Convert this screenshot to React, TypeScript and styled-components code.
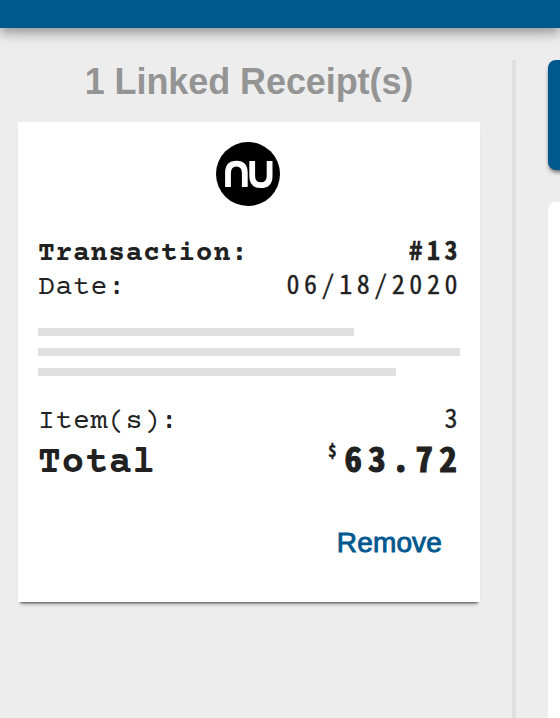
import React from "react";
import styled, { createGlobalStyle } from "styled-components";

const blue = "#00588f";

const GlobalStyle = createGlobalStyle`
  * { box-sizing: border-box; }
  html, body { margin: 0; padding: 0; background: #ededed; }
  body { overflow: hidden; }
`;

const Page = styled.div`
  display: flex;
  flex-direction: column;
  width: 560px;
  height: 718px;
  overflow: hidden;
  background: #ededed;
  color: #212121;
  font-family: "Liberation Sans", Arial, sans-serif;
`;

const Header = styled.header`
  flex: none;
  height: 28px;
  background: ${blue};
  box-shadow: 0 4px 8px -2px rgba(0, 0, 0, 0.2), 0 8px 10px rgba(0, 0, 0, 0.14),
    0 2px 20px rgba(0, 0, 0, 0.12);
`;

const Content = styled.main`
  display: flex;
  flex: 1;
  padding-top: 32px;
`;

const ReceiptColumn = styled.section`
  flex: none;
  width: 516px;
  padding: 0 32px 0 18px;
  border-right: 4px solid #e0e0e0;
`;

const Heading = styled.h1`
  margin: 0;
  height: 62px;
  font-size: 36px;
  line-height: 44px;
  letter-spacing: -0.08px;
  text-align: center;
  white-space: nowrap;
  color: #949494;
`;

const Card = styled.article`
  display: flex;
  flex-direction: column;
  width: 462px;
  height: 480px;
  padding: 20px 20px 0;
  background: #fff;
  box-shadow: 0 3px 2px -2px rgba(0, 0, 0, 0.5), 0 5px 4px -3px rgba(0, 0, 0, 0.3);
`;

const Logo = styled.svg`
  flex: none;
  width: 64px;
  height: 64px;
  margin: 0 0 28px 178px;
`;

const Row = styled.div<{ $bold?: boolean }>`
  display: flex;
  align-items: baseline;
  justify-content: space-between;
  height: 34px;
  font-family: "Courier Prime", "Liberation Mono", monospace;
  font-size: 28px;
  line-height: 40px;
  letter-spacing: 0.75px;
  font-weight: ${(p) => (p.$bold ? 700 : 400)};
`;

const Value = styled.span`
  font-family: "Noto Sans Mono CJK SC", "Liberation Mono", monospace;
  font-size: 26px;
  line-height: 1;
  letter-spacing: 4.55px;
  margin-right: -2px;
  -webkit-text-stroke: 0.3px currentColor;
`;

const Lines = styled.div`
  display: flex;
  flex-direction: column;
  gap: 12px;
  margin: 26px 0;
`;

const Line = styled.div<{ $width: number }>`
  width: ${(p) => p.$width}px;
  height: 8px;
  background: #e0e0e0;
`;

const TotalRow = styled(Row)`
  height: 48px;
  font-size: 38px;
  line-height: 56px;
  letter-spacing: 0.8px;
`;

const Amount = styled(Value)`
  display: flex;
  align-items: baseline;
  font-size: 35px;
  letter-spacing: 6.2px;
  margin-right: -3px;
  -webkit-text-stroke-width: 1px;
`;

const Currency = styled.span`
  align-self: flex-start;
  font-size: 17px;
  line-height: 22px;
  letter-spacing: 8px;
  -webkit-text-stroke-width: 0.3px;
`;

const Actions = styled.div`
  display: flex;
  justify-content: flex-end;
  padding: 41px 18px 0 0;
`;

const RemoveButton = styled.button`
  padding: 0;
  border: 0;
  background: none;
  color: ${blue};
  font: 400 28px/36px "Liberation Sans", Arial, sans-serif;
  letter-spacing: 0.15px;
  -webkit-text-stroke: 0.9px ${blue};
`;

const SideColumn = styled.aside`
  flex: none;
  width: 200px;
  margin-left: 32px;
`;

const SideBanner = styled.div`
  height: 110px;
  border-radius: 8px;
  background: ${blue};
  box-shadow: 0 3px 4px -1px rgba(0, 0, 0, 0.6);
`;

const SidePanel = styled.div`
  height: 600px;
  margin-top: 32px;
  border-radius: 8px;
  background: #fff;
`;

export default function App() {
  return (
    <Page>
      <GlobalStyle />
      <Header />
      <Content>
        <ReceiptColumn>
          <Heading>1 Linked Receipt(s)</Heading>
          <Card>
            <Logo viewBox="0 0 64 64" role="img" aria-label="nu">
              <circle cx="32" cy="32" r="32" fill="#000" />
              <g fill="none" stroke="#fff" strokeWidth="5.8">
                <path d="M12 45V31Q12 21.6 20.4 21.6Q28.8 21.6 28.8 31V45" />
                <path d="M36.2 19V34Q36.2 43.2 44.9 43.2Q53.6 43.2 53.6 34V19" />
              </g>
            </Logo>
            <Row $bold>
              <span>Transaction:</span>
              <Value>#13</Value>
            </Row>
            <Row>
              <span>Date:</span>
              <Value>06/18/2020</Value>
            </Row>
            <Lines>
              <Line $width={316} />
              <Line $width={422} />
              <Line $width={358} />
            </Lines>
            <Row>
              <span>Item(s):</span>
              <Value>3</Value>
            </Row>
            <TotalRow $bold>
              <span>Total</span>
              <Amount>
                <Currency>$</Currency>
                <span>63.72</span>
              </Amount>
            </TotalRow>
            <Actions>
              <RemoveButton>Remove</RemoveButton>
            </Actions>
          </Card>
        </ReceiptColumn>
        <SideColumn>
          <SideBanner />
          <SidePanel />
        </SideColumn>
      </Content>
    </Page>
  );
}
